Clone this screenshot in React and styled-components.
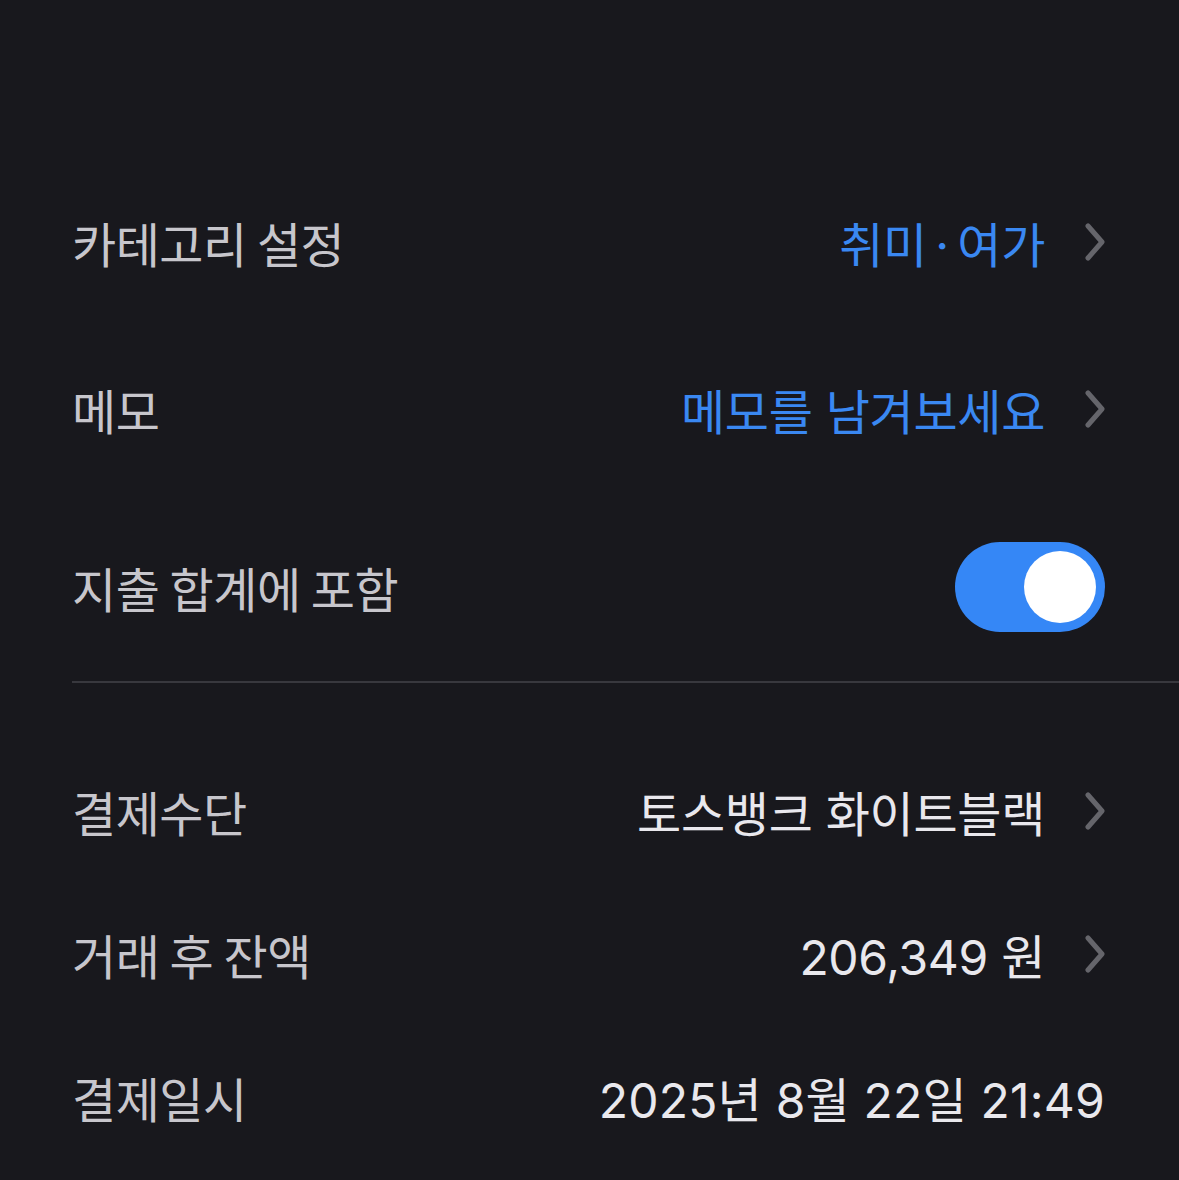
import styled, { createGlobalStyle } from "styled-components";

const GlobalStyle = createGlobalStyle`
  html, body {
    margin: 0;
    padding: 0;
    background: #18181d;
  }
  body {
    font-family: "Inter", "Noto Sans CJK KR", sans-serif;
  }
`;

const Page = styled.div`
  width: 1179px;
  height: 1180px;
  overflow: hidden;
  background: #18181d;
  padding-top: 158px;
  box-sizing: border-box;
`;

const Section = styled.div`
  display: flex;
  flex-direction: column;
  padding: ${(p) => p.$pad || "0"};
`;

const Row = styled.div`
  display: flex;
  align-items: center;
  justify-content: space-between;
  height: ${(p) => p.$h}px;
  padding: 0 74px 0 72px;
`;

const Label = styled.div`
  font-family: "Noto Sans CJK KR", sans-serif;
  font-size: 48px;
  color: #c7c6cc;
  letter-spacing: -0.5px;
`;

const Right = styled.div`
  display: flex;
  align-items: center;
  gap: 40px;
`;

const Value = styled.div`
  font-size: 48px;
  color: ${(p) => (p.$blue ? "#3a88f2" : "#e9e8ed")};
  letter-spacing: ${(p) => (p.$wide ? "0.2px" : "-0.3px")};
`;

const Divider = styled.div`
  height: 2px;
  margin-left: 72px;
  background: #38383e;
`;

const Toggle = styled.div`
  width: 150px;
  height: 90px;
  border-radius: 45px;
  background: #3587f6;
  display: flex;
  align-items: center;
  justify-content: flex-end;
  padding: 0 9px;
  box-sizing: border-box;
`;

const Knob = styled.div`
  width: 72px;
  height: 72px;
  border-radius: 50%;
  background: #ffffff;
`;

const Chevron = () => (
  <svg width="20" height="38" viewBox="0 0 20 38">
    <polyline
      points="3,3 17,19 3,35"
      fill="none"
      stroke="#65656b"
      strokeWidth="5"
      strokeLinecap="round"
      strokeLinejoin="round"
    />
  </svg>
);

const NavRow = ({ label, value, blue, h }) => (
  <Row $h={h}>
    <Label>{label}</Label>
    <Right>
      <Value $blue={blue}>{value}</Value>
      <Chevron />
    </Right>
  </Row>
);

export default function App() {
  return (
    <Page>
      <GlobalStyle />
      <Section>
        <NavRow h={167} label="카테고리 설정" value={"취미\u2009·\u2009여가"} blue />
        <NavRow h={167} label="메모" value="메모를 남겨보세요" blue />
        <Row $h={189}>
          <Label>지출 합계에 포함</Label>
          <Toggle>
            <Knob />
          </Toggle>
        </Row>
      </Section>
      <Divider />
      <Section $pad="56px 0 0">
        <NavRow h={143} label="결제수단" value="토스뱅크 화이트블랙" />
        <NavRow h={143} label="거래 후 잔액" value="206,349 원" />
        <Row $h={143}>
          <Label>결제일시</Label>
          <Value $wide>2025년 8월 22일 21:49</Value>
        </Row>
      </Section>
    </Page>
  );
}
